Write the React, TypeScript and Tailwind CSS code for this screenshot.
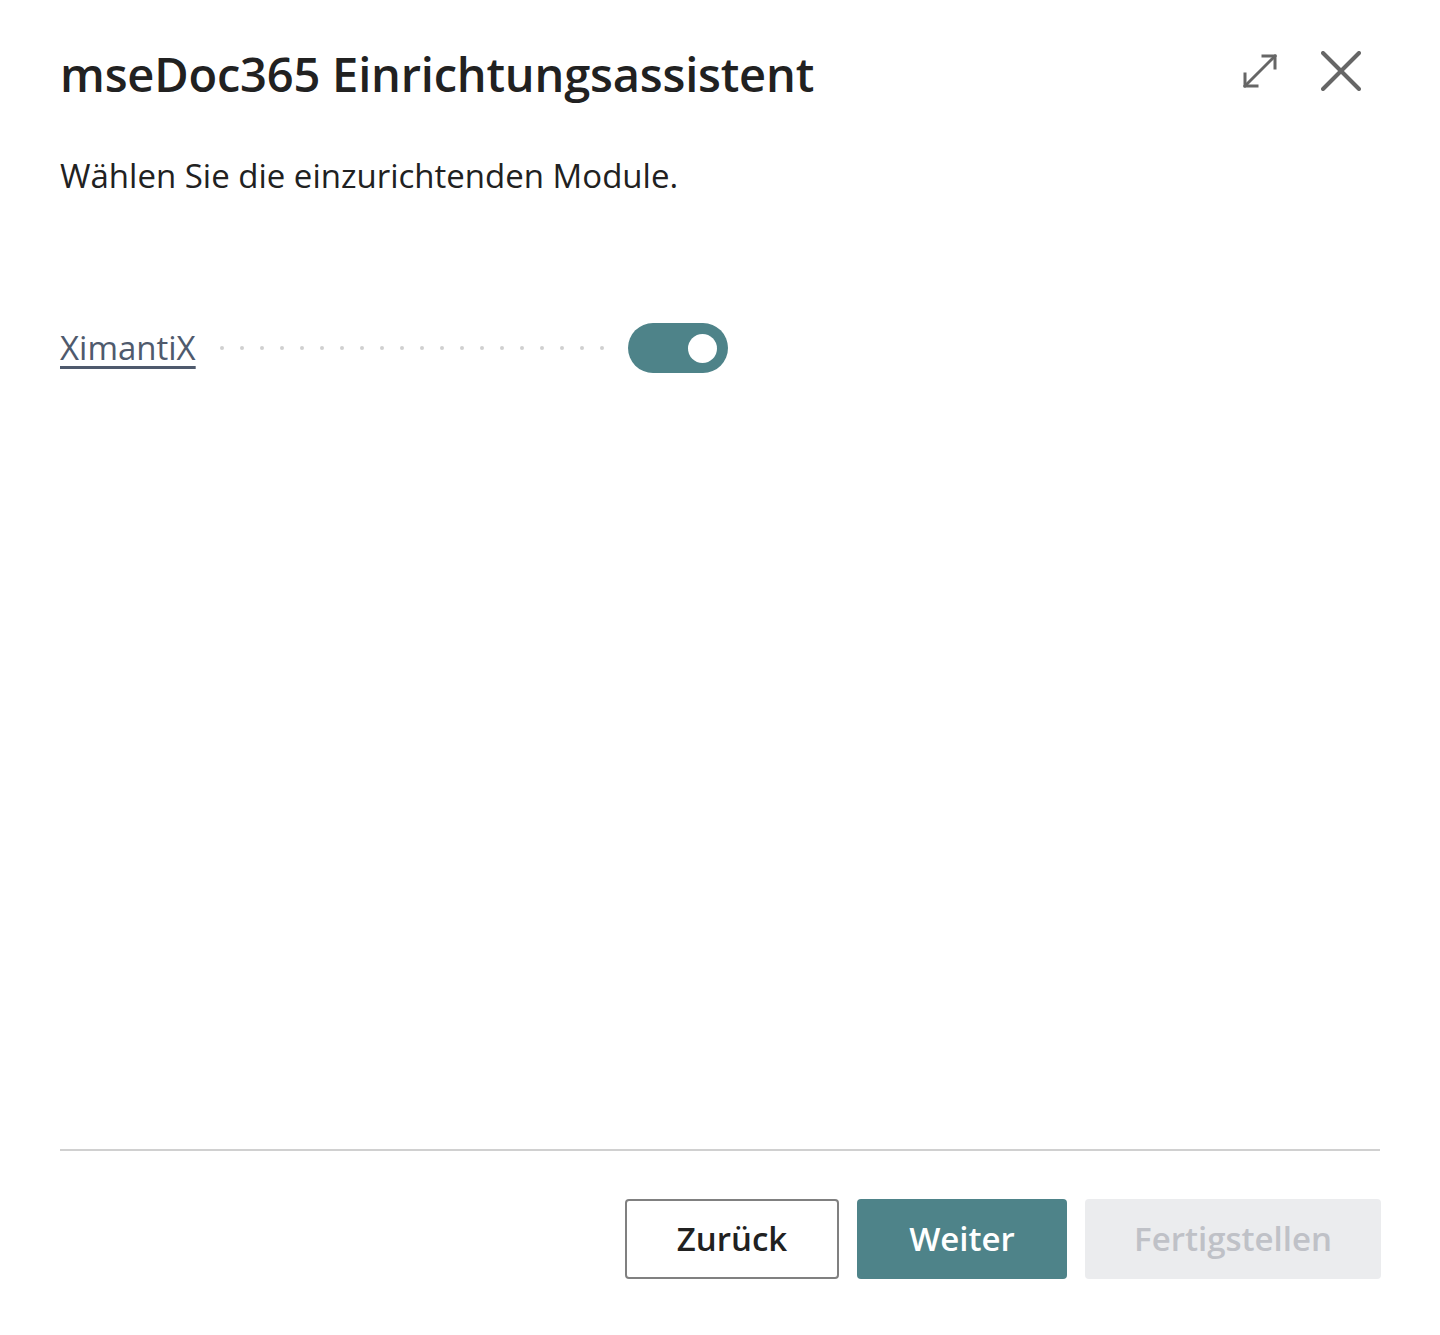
import { useState } from "react";

const Dots = () => (
  <div className="flex items-center gap-[16px] ml-[24px] mr-[24px]">
    {Array.from({ length: 20 }).map((_, i) => (
      <span key={i} className="w-[4px] h-[4px] rounded-full bg-[#d0d0d0]" />
    ))}
  </div>
);

export default function App() {
  const [on, setOn] = useState(true);

  return (
    <div className="w-[1440px] h-[1335px] bg-white text-[#212121] flex flex-col px-[60px] font-['Open_Sans',sans-serif]">
      <div className="flex items-center justify-between pt-[43px]">
        <h1 className="text-[47px] leading-[62px] font-semibold tracking-[-0.2px]">mseDoc365 Einrichtungsassistent</h1>
        <div className="flex items-center gap-[42px] mr-[19px] -mt-[6px]">
          <button className="w-[38px] h-[38px] flex items-center justify-center">
            <svg width="38" height="38" viewBox="0 0 38 38" fill="none" stroke="#666" strokeWidth="3" strokeLinecap="square">
              <path d="M4 34 L34 4" />
              <path d="M22 4 H34 V16" />
              <path d="M4 22 V34 H16" />
            </svg>
          </button>
          <button className="w-[40px] h-[40px] flex items-center justify-center">
            <svg width="40" height="40" viewBox="0 0 40 40" fill="none" stroke="#666" strokeWidth="4" strokeLinecap="round">
              <path d="M2 2 L38 38" />
              <path d="M38 2 L2 38" />
            </svg>
          </button>
        </div>
      </div>

      <p className="mt-[49px] text-[33px] leading-[44px]">Wählen Sie die einzurichtenden Module.</p>

      <div className="flex items-center mt-[125px]">
        <a href="#" className="text-[33px] leading-[44px] text-[#4f5a6d] underline decoration-[3px] underline-offset-[6px]">XimantiX</a>
        <Dots />
        <button
          onClick={() => setOn(!on)}
          className={`w-[100px] h-[50px] rounded-full flex items-center px-[11px] ${on ? "bg-[#4e8389] justify-end" : "bg-[#c8c8c8] justify-start"}`}
        >
          <span className="w-[29px] h-[29px] rounded-full bg-white" />
        </button>
      </div>

      <div className="flex-1" />

      <div className="border-t-2 border-[#d0d0d0]" />
      <div className="flex justify-end gap-[18px] mt-[48px] mb-[56px] mr-[-1px]">
        <button className="w-[214px] h-[80px] rounded-[4px] border-2 border-[#808080] text-[33px] font-semibold text-[#212121]">Zurück</button>
        <button className="w-[210px] h-[80px] rounded-[4px] bg-[#4e8389] text-[33px] font-semibold text-white">Weiter</button>
        <button className="w-[296px] h-[80px] rounded-[4px] bg-[#ebecee] text-[33px] font-semibold text-[#bfc1c7]">Fertigstellen</button>
      </div>
    </div>
  );
}
